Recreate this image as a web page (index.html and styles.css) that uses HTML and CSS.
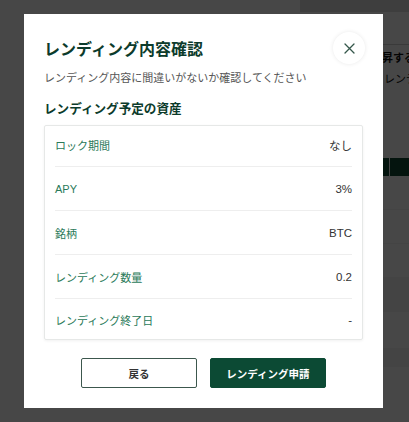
FILE: index.html
```html
<!DOCTYPE html>
<html lang="ja">
<head>
<meta charset="utf-8">
<title>レンディング内容確認</title>
<link rel="stylesheet" href="styles.css">
</head>
<body>
<div class="page">
  <div class="topbar"></div>
  <div class="subbar"></div>
  <p class="bg-line bg-line-strong">上昇する場合</p>
  <p class="bg-line bg-line-2">レンディング</p>
  <div class="bg-thead"><span class="bg-th1"></span><span class="bg-th2"></span></div>
  <div class="bg-rows">
    <div class="bg-row"></div>
    <div class="bg-row"></div>
    <div class="bg-row"></div>
    <div class="bg-row bg-row-alt"></div>
    <div class="bg-row bg-row-tall"></div>
    <div class="bg-row bg-row-alt bg-row-short"></div>
  </div>
</div>

<div class="overlay">
  <div class="modal">
    <div class="modal-head">
      <h1 class="modal-title">レンディング内容確認</h1>
      <button class="close-btn" aria-label="閉じる">
        <svg width="11" height="11" viewBox="0 0 11 11"><path d="M1 1 L10 10 M10 1 L1 10" stroke="#35574b" stroke-width="1.3" fill="none" stroke-linecap="round"/></svg>
      </button>
    </div>
    <p class="modal-sub">レンディング内容に間違いがないか確認してください</p>
    <h2 class="section-title">レンディング予定の資産</h2>
    <div class="card">
      <div class="row"><span class="label">ロック期間</span><span class="value">なし</span></div>
      <div class="row"><span class="label">APY</span><span class="value">3%</span></div>
      <div class="row"><span class="label">銘柄</span><span class="value">BTC</span></div>
      <div class="row"><span class="label">レンディング数量</span><span class="value">0.2</span></div>
      <div class="row"><span class="label">レンディング終了日</span><span class="value">-</span></div>
    </div>
    <div class="actions">
      <button class="btn btn-outline">戻る</button>
      <button class="btn btn-primary">レンディング申請</button>
    </div>
  </div>
</div>
</body>
</html>
```
FILE: styles.css
```css
* { box-sizing: border-box; }

html, body {
  margin: 0;
  padding: 0;
}

body {
  width: 409px;
  height: 422px;
  overflow: hidden;
  font-family: "Liberation Sans", "Noto Sans CJK JP", sans-serif;
  background: #ffffff;
}

/* ---------- page behind the overlay ---------- */
.page {
  width: 409px;
  height: 422px;
  background: #ffffff;
  overflow: hidden;
}

.topbar {
  height: 12px;
  margin-left: 300px;
  background: #dedede;
}

.subbar {
  height: 33px;
  margin-left: 300px;
  border-bottom: 1px solid #d0d0d0;
  background: #ffffff;
}

.bg-line {
  margin: 0;
  font-size: 11px;
  line-height: 16px;
  color: #111;
  white-space: nowrap;
}

.bg-line-strong {
  padding-left: 371px;
  margin-top: 5px;
  font-weight: bold;
}

.bg-line-2 {
  padding-left: 384px;
  margin-top: 5px;
}

.bg-thead {
  display: flex;
  gap: 1px;
  margin-top: 71px;
  margin-left: 300px;
  height: 18px;
}

.bg-th1 {
  width: 89px;
  background: #0f4a35;
}

.bg-th2 {
  flex: 1;
  background: #0f4a35;
}

.bg-rows {
  margin-left: 300px;
}

.bg-row {
  height: 34px;
  border-bottom: 1px solid #f4f4f4;
}

.bg-row-alt {
  background: #f2f2f2;
}

.bg-row-tall {
  height: 37px;
}

.bg-row-short {
  height: 18px;
}

/* ---------- overlay + modal ---------- */
.overlay {
  position: fixed;
  inset: 0;
  background: rgba(0, 0, 0, 0.72);
  padding: 14px 0 0 24px;
}

.modal {
  width: 359px;
  height: 394px;
  background: #ffffff;
  padding: 18px 20px 20px 20px;
  display: flex;
  flex-direction: column;
}

.modal-head {
  display: flex;
  align-items: center;
  justify-content: space-between;
  margin-right: -2px;
}

.modal-title {
  margin: 0;
  font-family: "Noto Sans CJK JP", sans-serif;
  font-size: 16px;
  line-height: 32px;
  font-weight: bold;
  color: #0c3b2b;
}

.close-btn {
  width: 32px;
  height: 32px;
  border-radius: 50%;
  border: none;
  background: #ffffff;
  box-shadow: 0 0 4px rgba(0, 0, 0, 0.09);
  display: flex;
  align-items: center;
  justify-content: center;
  padding: 0;
}

.modal-sub {
  margin: 5px 0 0 0;
  font-family: "Noto Sans CJK JP", sans-serif;
  font-size: 11px;
  line-height: 16px;
  color: #555555;
}

.section-title {
  margin: 14px 0 0 0;
  font-family: "Noto Sans CJK JP", sans-serif;
  font-size: 12.6px;
  line-height: 18px;
  font-weight: bold;
  color: #0c3b2b;
}

.card {
  margin-top: 8px;
  border: 1px solid #e6e8e7;
  border-radius: 2px;
  box-shadow: 0 1px 3px rgba(0, 0, 0, 0.06);
  padding: 0 10px;
}

.row {
  display: flex;
  align-items: center;
  justify-content: space-between;
  height: 44px;
  border-bottom: 1px solid #eeeeee;
}

.row:first-child {
  height: 41px;
  padding-bottom: 3px;
}

.row:last-child {
  height: 40px;
  border-bottom: none;
  padding-top: 2px;
}

.label {
  font-size: 11px;
  color: #2a7a59;
}

.value {
  font-size: 11.5px;
  color: #333333;
}

.actions {
  display: flex;
  justify-content: center;
  gap: 13px;
  margin-top: 18px;
}

.btn {
  width: 116px;
  height: 30px;
  border-radius: 2px;
  font-family: "Noto Sans CJK JP", sans-serif;
  font-size: 10.5px;
  font-weight: bold;
  padding: 0;
}

.btn-outline {
  background: #ffffff;
  border: 1px solid #3c574d;
  color: #333333;
}

.btn-primary {
  background: #0c4a34;
  border: 1px solid #0c4a34;
  color: #ffffff;
}
```
